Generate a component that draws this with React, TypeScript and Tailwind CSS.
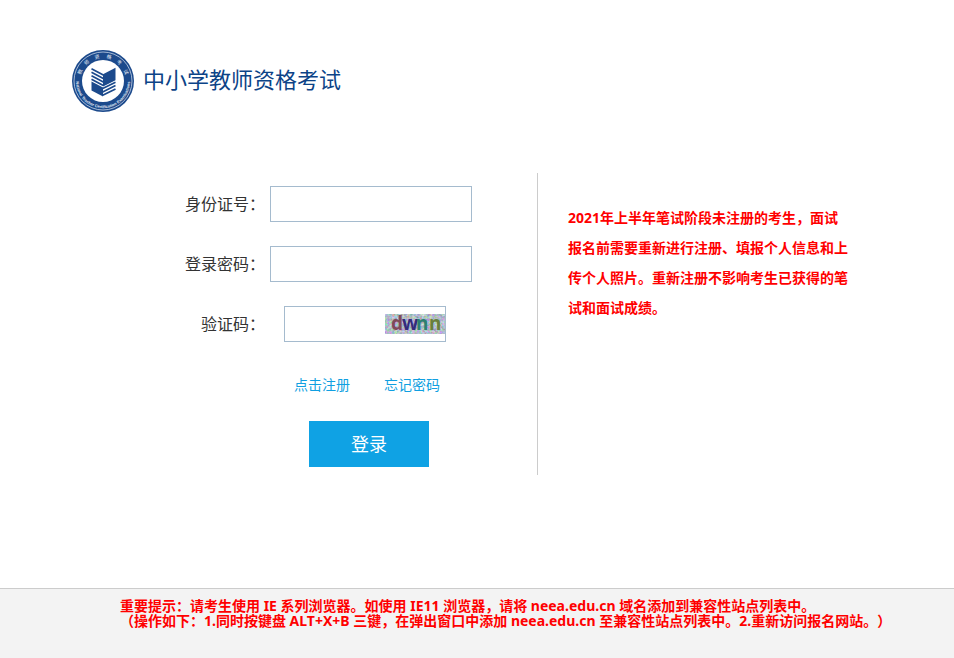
import { useId } from 'react'
import type { ReactNode } from 'react'

export default function App() {
  return (
    <div className="flex min-h-screen flex-col bg-white font-['Noto_Sans','Noto_Sans_CJK_SC',sans-serif] text-[#333]">
      <header className="mx-auto flex w-full max-w-[954px] items-center gap-[9px] px-[72px] pt-[50px]">
        <Logo />
        <h1 className="pb-1 text-[22px] leading-8 text-[#0c4387]">中小学教师资格考试</h1>
      </header>

      <main className="mx-auto w-full max-w-[954px] flex-1 px-[72px] pt-[61px] pb-12">
        <div className="flex">
          {/* Login form */}
          <form
            className="flex min-h-[302px] w-[466px] flex-col gap-6 border-r border-[#ccc] pt-[13px] pb-2"
            onSubmit={(e) => e.preventDefault()}
          >
            <Field id="idNumber" label="身份证号：">
              <input
                id="idNumber"
                type="text"
                className="h-9 w-[202px] border border-[#a5bbce] px-2 outline-none"
              />
            </Field>
            <Field id="password" label="登录密码：">
              <input
                id="password"
                type="password"
                className="h-9 w-[202px] border border-[#a5bbce] px-2 outline-none"
              />
            </Field>
            <Field id="captcha" label="验证码：">
              <div className="ml-[14px] flex h-9 w-[162px] items-center border border-[#a5bbce]">
                <input id="captcha" type="text" className="h-full min-w-0 flex-1 px-2 outline-none" />
                <Captcha />
              </div>
            </Field>

            <div className="flex flex-col pl-[222px]">
              <div className="flex gap-[34px] pt-[9px] text-sm text-[#109fe1]">
                <a href="#register">点击注册</a>
                <a href="#forgot">忘记密码</a>
              </div>
              <button
                type="submit"
                className="mt-[26px] ml-[15px] h-[46px] w-[120px] bg-[#0fa2e4] text-lg text-white"
              >
                登录
              </button>
            </div>
          </form>

          {/* Notice */}
          <aside className="flex-1 pt-[30px] pl-[30px]">
            <p className="max-w-[280px] text-sm leading-[30px] font-bold text-[#f00]">
              2021年上半年笔试阶段未注册的考生，面试报名前需要重新进行注册、填报个人信息和上传个人照片。重新注册不影响考生已获得的笔试和面试成绩。
            </p>
          </aside>
        </div>
      </main>

      <footer className="min-h-[70px] border-t border-[#ccc] bg-[#f3f3f3] py-[9px]">
        <div className="mx-auto max-w-[954px] pl-[120px] text-sm leading-[15px] font-bold text-[#f00] [text-spacing-trim:space-all]">
          <p>重要提示：请考生使用 IE 系列浏览器。如使用 IE11 浏览器，请将 neea.edu.cn 域名添加到兼容性站点列表中。</p>
          <p>（操作如下：1.同时按键盘 ALT+X+B 三键，在弹出窗口中添加 neea.edu.cn 至兼容性站点列表中。2.重新访问报名网站。）</p>
        </div>
      </footer>
    </div>
  )
}

function Field({ id, label, children }: { id: string; label: string; children: ReactNode }) {
  return (
    <div className="flex items-center gap-[5px]">
      <label htmlFor={id} className="w-[193px] text-right text-base">
        {label}
      </label>
      {children}
    </div>
  )
}

function Captcha() {
  const noise = useId()
  return (
    <svg width="60" height="20" viewBox="0 0 60 20" role="img" aria-label="验证码" className="overflow-visible">
      <filter id={noise} x="0" y="0" width="100%" height="100%" colorInterpolationFilters="sRGB">
        <feTurbulence type="fractalNoise" baseFrequency="0.4" numOctaves="2" seed="4" />
        <feColorMatrix values="0.6 0 0 0 0.4  0 0.6 0 0 0.44  0 0 0.6 0 0.48  0 0 0 0 1" />
      </filter>
      <rect width="60" height="20" filter={`url(#${noise})`} />
      <g className="font-['Noto_Sans',sans-serif] text-[19px] font-bold">
        <text x="6" y="16" fill="#804a58">d</text>
        <text x="17" y="16" fill="#342a7c">w</text>
        <text x="31" y="16" fill="#2c8070">n</text>
        <text x="44" y="16" fill="#68803c">n</text>
      </g>
    </svg>
  )
}

function Logo() {
  const top = useId()
  const bottom = useId()
  return (
    <svg width="62" height="62" viewBox="0 0 62 62" role="img" aria-label="教师资格考试">
      <circle cx="31" cy="31" r="31" fill="#1c4a8c" />
      <circle cx="31" cy="31" r="29" fill="none" stroke="#c8d6e8" strokeWidth="0.8" />
      <circle cx="31" cy="31" r="21" fill="#fff" />
      <path id={top} d="M8 31a23 23 0 0 1 46 0" fill="none" />
      <path id={bottom} d="M4.5 26a27 27 0 1 0 53 0" fill="none" />
      {[
        ['教', '12%'],
        ['师', '27%'],
        ['资', '42%'],
        ['格', '58%'],
        ['考', '73%'],
        ['试', '88%'],
      ].map(([char, offset]) => (
        <text key={char} fill="#e3ebf5" className="text-[5px]">
          <textPath href={`#${top}`} startOffset={offset} textAnchor="middle">
            {char}
          </textPath>
        </text>
      ))}
      <text fill="#e3ebf5" className="font-['Liberation_Sans',sans-serif] text-[4px] font-bold">
        <textPath href={`#${bottom}`} startOffset="50%" textAnchor="middle">
          National Teacher Certification Examinations
        </textPath>
      </text>
      {/* Book: each half has one solid page and one striped page */}
      <g fill="#1c4a8c">
        <path d="M31 24.2 43.5 17.8v12.4L31 36.4z" />
        <path d="M19.5 31.4 31 37.4v9l-11.5-6z" />
      </g>
      <g fill="none" stroke="#1c4a8c" strokeWidth="1.7">
        <path d="m19.5 18.8 11.8 6.2M19.5 22.3l11.8 6.2M19.5 25.8l11.8 6.2M19.5 29.3l11.8 6.2" />
        <path d="m30.7 38.6 12.8-6.4M30.7 42l12.8-6.4M30.7 45.3l12.8-6.4" />
      </g>
    </svg>
  )
}
